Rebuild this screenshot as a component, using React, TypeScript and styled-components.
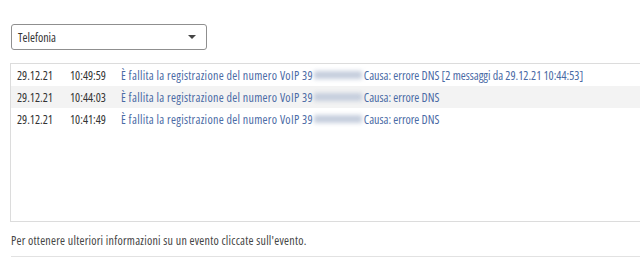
import React from 'react';
import styled, { createGlobalStyle } from 'styled-components';

interface IEvent {
  id: number;
  date: string;
  time: string;
  extra?: string;
}

const events: IEvent[] = [
  { id: 1, date: '29.12.21', time: '10:49:59', extra: ' [2 messaggi da 29.12.21 10:44:53]' },
  { id: 2, date: '29.12.21', time: '10:44:03' },
  { id: 3, date: '29.12.21', time: '10:41:49' },
];

function App() {
  return (
    <Page>
      <GlobalStyle />
      <SelectBox>
        <SelectLabel>Telefonia</SelectLabel>
        <Caret />
      </SelectBox>
      <LogBox>
        {events.map((ev, i) => (
          <Row key={ev.id} $striped={i % 2 === 1}>
            <DateCell>{ev.date}</DateCell>
            <TimeCell>{ev.time}</TimeCell>
            <Message>
              <Lead>È fallita la registrazione del numero VoIP 39</Lead>
              <Hidden />
              Causa: errore DNS{ev.extra}
            </Message>
          </Row>
        ))}
      </LogBox>
      <Hint>Per ottenere ulteriori informazioni su un evento cliccate sull'evento.</Hint>
    </Page>
  );
}

export default App;

const GlobalStyle = createGlobalStyle`
  body {
    margin: 0;
    background: #fff;
    font-family: 'Open Sans', sans-serif;
    font-stretch: 75%;
  }
`;

const Page = styled.div`
  width: 640px;
  height: 260px;
  overflow: hidden;
  padding-top: 24px;
  box-sizing: border-box;
`;

const SelectBox = styled.div`
  margin-left: 11px;
  width: 196px;
  height: 26px;
  box-sizing: border-box;
  border: 1px solid #8f8f8f;
  border-radius: 3px;
  display: flex;
  align-items: center;
  justify-content: space-between;
  padding: 0 10px 0 6px;
`;

const SelectLabel = styled.span`
  font-size: 12px;
  color: #333;
`;

const Caret = styled.span`
  width: 0;
  height: 0;
  border-left: 4px solid transparent;
  border-right: 4px solid transparent;
  border-top: 4px solid #444;
`;

const LogBox = styled.div`
  margin: 13px 0 0 10px;
  width: 660px;
  height: 159px;
  box-sizing: border-box;
  border: 1px solid #dcdcdc;
  border-right: none;
`;

const Row = styled.div<{ $striped: boolean }>`
  display: flex;
  align-items: center;
  height: 22px;
  font-size: 12px;
  background: ${p => (p.$striped ? '#f3f3f3' : 'transparent')};
`;

const DateCell = styled.span`
  flex-shrink: 0;
  width: 53px;
  padding-left: 6px;
  color: #333;
`;

const TimeCell = styled.span`
  flex-shrink: 0;
  width: 51px;
  color: #333;
`;

const Message = styled.span`
  color: #4a6aa5;
  display: flex;
  align-items: center;
  white-space: pre;
`;

const Lead = styled.span`
  letter-spacing: 0.3px;
`;

const Hidden = styled.span`
  display: inline-block;
  flex-shrink: 0;
  width: 48px;
  height: 8px;
  margin: 0 2px 0 1px;
  background: #c5cedd;
  filter: blur(2px);
`;

const Hint = styled.div`
  margin: 10px 0 0 11px;
  font-size: 12px;
  letter-spacing: 0.25px;
  color: #444;
  padding-bottom: 7px;
  border-bottom: 1px solid #e2e2e2;
`;
